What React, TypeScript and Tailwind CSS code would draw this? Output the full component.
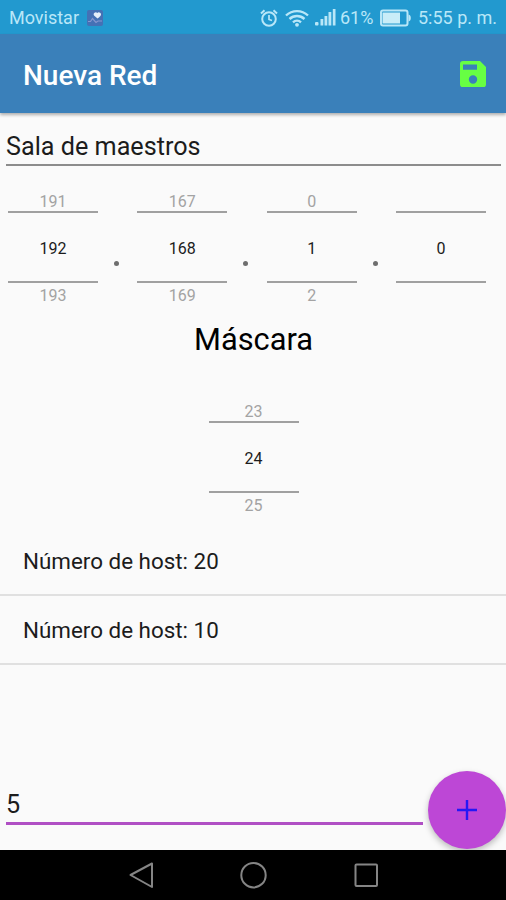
interface NumberPickerProps {
  previous?: string;
  value: string;
  next?: string;
}

const NumberPicker = ({ previous, value, next }: NumberPickerProps) => (
  <div className="flex w-[90px] flex-col text-center text-base leading-5">
    <div className="h-5 pt-[2px] text-[#a3a3a3]">{previous}</div>
    <div className="mt-px flex h-[72px] items-center justify-center border-y-2 border-[#a0a0a0] pt-[3px] font-[450] text-[#1c1c1c]">
      {value}
    </div>
    <div className="mt-[2px] h-5 pt-px text-[#a3a3a3]">{next}</div>
  </div>
);

const Dot = () => <span className="mt-[71px] mr-px -ml-px size-[5px] rounded-full bg-[#6e6e6e]" />;

const StatusBar = () => (
  <div className="flex h-[34px] items-center bg-[#2299cf] pt-px text-[#b9e7f8]">
    <span className="ml-[9px] w-[78px] text-[18px]">Movistar</span>
    <svg className="size-[16px]" viewBox="0 0 16 16">
      <rect width="16" height="16" rx="2" fill="#4471b5" />
      <path d="M10.500 8.500 7 5.500a2 2 0 0 1 .5-2.800 2.100 2.100 0 0 1 2.800.3 2.200 2.200 0 0 1 3.700 1c.3 1.500-1.500 3-3.500 4.500Z" fill="#e4effa" />
      <path d="M1 11.500h2.500l2-3 3.500 4 2-1.500h4" fill="none" stroke="#8497cf" strokeWidth="1.200" />
    </svg>
    <svg className="ml-[157px] size-[18px]" viewBox="0 0 18 18" fill="none" stroke="currentColor">
      <circle cx="9" cy="10" r="6.800" strokeWidth="2" />
      <path d="M9 6v4.500l3 1" strokeWidth="1.700" />
      <path d="M1 4.500 4.500 1.300M17 4.500l-3.500-3.200" strokeWidth="2" />
    </svg>
    <svg className="ml-[7px] h-[18px] w-[24px]" viewBox="0 0 24 18" fill="none" stroke="currentColor" strokeWidth="2.400">
      <path d="M1 6.500a16 16 0 0 1 22 0M4.500 10a11 11 0 0 1 15 0M8 13.300a6 6 0 0 1 8 0" />
      <circle cx="12" cy="15.800" r="1.900" fill="currentColor" stroke="none" />
    </svg>
    <svg className="ml-[6px] h-[18px] w-[21px]" viewBox="0 0 21 18" fill="currentColor">
      <rect y="13" width="3.500" height="3.500" rx="1" />
      <rect x="5.500" y="10" width="2.800" height="6.500" />
      <rect x="9.500" y="7" width="2.800" height="9.500" />
      <rect x="13.500" y="3" width="2.800" height="13.500" />
      <rect x="17.800" y="0" width="2.700" height="16.500" />
    </svg>
    <span className="ml-[4px] w-[40px] text-[18px]">61%</span>
    <svg className="h-[18px] w-[31px]" viewBox="0 0 31 18">
      <rect x="1" y="1.500" width="26.500" height="15" rx="2" fill="none" stroke="currentColor" strokeWidth="2" />
      <rect x="2.500" y="3.500" width="17.500" height="11" fill="#c9edf8" />
      <path d="M28.500 5.500c1.700.7 2.300 1.500 2.300 3.500s-.6 2.800-2.300 3.500Z" fill="currentColor" />
    </svg>
    <span className="ml-[7px] text-[18px] whitespace-nowrap">5:55 p. m.</span>
  </div>
);

const AppBar = () => (
  <header className="flex h-[79px] items-center justify-between bg-[#3a80ba] pr-[20px] pl-[23px] shadow-[0_2px_3px_rgba(0,0,0,0.3)]">
    <h1 className="pt-[4px] text-[28px] font-medium text-white">Nueva Red</h1>
    <svg className="size-[26px]" viewBox="0 0 26 26" fill="#67ff43">
      <path
        fillRule="evenodd"
        d="M3 0h17l6 6v17.500a2.800 2.800 0 0 1-2.800 2.800H3a3 3 0 0 1-3-3V3a3 3 0 0 1 3-3Zm0 3.500v5.200h14V3.500Zm10 10.800a4.200 4.200 0 1 0 0 8.400 4.200 4.200 0 0 0 0-8.400Z"
      />
    </svg>
  </header>
);

const NavigationBar = () => (
  <nav className="flex h-[50px] bg-black">
    <svg className="h-[50px] w-full" viewBox="0 0 506 50" fill="none" stroke="#858585" strokeWidth="2" strokeLinejoin="round">
      <path d="M152 13.500v23.500l-21.500-12Z" />
      <circle cx="253.500" cy="25.200" r="12.200" />
      <rect x="355.500" y="14.500" width="21.500" height="21.500" rx="1" />
    </svg>
  </nav>
);

const hosts = [20, 10];

export default function App() {
  return (
    <div className="flex h-[900px] w-[506px] flex-col overflow-hidden bg-[#fafafa] font-['Roboto',sans-serif] text-[#1c1c1c]">
      <StatusBar />
      <AppBar />
      <main className="flex flex-1 flex-col">
        <div className="mr-[5px] ml-[6px] flex h-[53px] items-end border-b-2 border-[#8c8c8c] pb-px text-[25.200px] leading-8">
          Sala de maestros
        </div>
        <section className="mt-[24px] flex justify-between pr-5 pl-2">
          <NumberPicker previous="191" value="192" next="193" />
          <Dot />
          <NumberPicker previous="167" value="168" next="169" />
          <Dot />
          <NumberPicker previous="0" value="1" next="2" />
          <Dot />
          <NumberPicker value="0" />
        </section>
        <h2 className="mt-[15px] pl-px text-center text-[30.800px] leading-10 text-black">Máscara</h2>
        <section className="mt-[40px] flex justify-center pl-px">
          <NumberPicker previous="23" value="24" next="25" />
        </section>
        <ul className="mt-[12px] text-[22.400px]">
          {hosts.map((count) => (
            <li key={count} className="flex h-[69px] items-center border-b-2 border-[#e0e0e0] pt-[3px] pl-[23px]">
              Número de host: {count}
            </li>
          ))}
        </ul>
        <div className="mt-auto flex items-end">
          <div className="mb-[25px] ml-[6px] w-[417px] border-b-3 border-[#b04fc4] pb-px text-[25.200px] leading-8">5</div>
          <button className="mb-px ml-[5px] flex size-[78px] items-center justify-center rounded-full bg-[#bd47d6] shadow-[0_3px_6px_rgba(0,0,0,0.25)]">
            <svg className="size-[20px]" viewBox="0 0 20 20" stroke="#2418f5" strokeWidth="2.400">
              <path d="M10 0v20M0 10h20" />
            </svg>
          </button>
        </div>
      </main>
      <NavigationBar />
    </div>
  );
}
